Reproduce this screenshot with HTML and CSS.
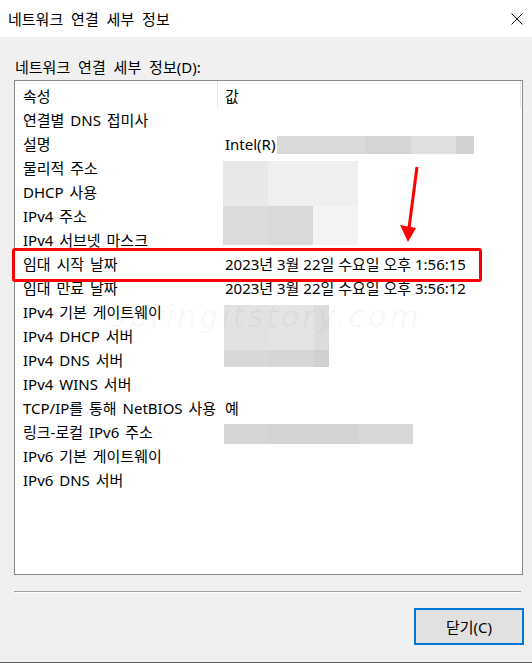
FILE: index.html
```html
<!DOCTYPE html>
<html lang="ko">
<head>
    <meta charset="UTF-8">
    <meta name="viewport" content="width=device-width, initial-scale=1.0">
    <title>네트워크 연결 세부 정보</title>
    <link rel="stylesheet" href="styles.css">
</head>
<body>
    <div class="window">
        <div class="titlebar">
            <span class="title">네트워크 연결 세부 정보</span>
            <svg class="close" width="12" height="12" viewBox="0 0 12 12">
                <path d="M0.5 0.5 L11.5 11.5 M11.5 0.5 L0.5 11.5" stroke="#111" stroke-width="1" fill="none"/>
            </svg>
        </div>

        <div class="content">
            <div class="label">네트워크 연결 세부 정보(D):</div>

            <div class="listbox">
                <div class="header">
                    <div class="hcell">속성</div>
                    <div class="hcell">값</div>
                    <div class="hcell end"></div>
                </div>

                <div class="row"><span>연결별 DNS 접미사</span><span></span></div>
                <div class="row"><span>설명</span><span>Intel(R)</span></div>
                <div class="row"><span>물리적 주소</span><span></span></div>
                <div class="row"><span>DHCP 사용</span><span></span></div>
                <div class="row"><span>IPv4 주소</span><span></span></div>
                <div class="row"><span>IPv4 서브넷 마스크</span><span></span></div>
                <div class="row"><span>임대 시작 날짜</span><span>2023년 3월 22일 수요일 오후 1:56:15</span></div>
                <div class="row"><span>임대 만료 날짜</span><span>2023년 3월 22일 수요일 오후 3:56:12</span></div>
                <div class="row"><span>IPv4 기본 게이트웨이</span><span></span></div>
                <div class="row"><span>IPv4 DHCP 서버</span><span></span></div>
                <div class="row"><span>IPv4 DNS 서버</span><span></span></div>
                <div class="row"><span>IPv4 WINS 서버</span><span></span></div>
                <div class="row"><span>TCP/IP를 통해 NetBIOS 사용</span><span>예</span></div>
                <div class="row"><span>링크-로컬 IPv6 주소</span><span></span></div>
                <div class="row"><span>IPv6 기본 게이트웨이</span><span></span></div>
                <div class="row"><span>IPv6 DNS 서버</span><span></span></div>

                <!-- pixelated redactions over the values -->
                <div class="blur blur-desc"></div>
                <div class="blur blur-mac"></div>
                <div class="blur blur-dns"></div>
                <div class="blur blur-ipv6"></div>

                <div class="watermark">springitstory.com</div>
            </div>

            <div class="separator"></div>

            <div class="actions">
                <button class="close-btn">닫기(C)</button>
            </div>
        </div>

        <!-- annotation -->
        <div class="highlight"></div>
        <svg class="arrow" width="30" height="80" viewBox="0 0 30 80">
            <path d="M19 1 L11 62" stroke="#ff0000" stroke-width="3" fill="none"/>
            <path d="M2 59 L10 76 L18 62 Z" fill="#ff0000"/>
        </svg>
    </div>
</body>
</html>
```

FILE: styles.css
```css
* {
    margin: 0;
    padding: 0;
    box-sizing: border-box;
}

body {
    font-family: "Noto Sans", "Noto Sans CJK KR", sans-serif;
    font-size: 15px;
    color: #000;
    background: #f0f0f0;
}

.window {
    position: relative;
    width: 532px;
    height: 663px;
    display: flex;
    flex-direction: column;
    border-bottom: 1px solid #5a5a5a;
}

/* Title bar */
.titlebar {
    height: 37px;
    background: #fff;
    display: flex;
    align-items: center;
    justify-content: space-between;
    padding: 0 9px 0 8px;
}

.title {
    line-height: 24px;
    word-spacing: 4px;
}

/* Body */
.content {
    flex: 1;
    background: #f0f0f0;
    padding: 18px 0 0 14px;
}

.label {
    line-height: 24px;
    height: 25px;
    padding-left: 1px;
    word-spacing: 4px;
}

.listbox {
    position: relative;
    width: 509px;
    height: 495px;
    background: #fff;
    border: 1px solid #828790;
    overflow: hidden;
}

.header {
    display: grid;
    grid-template-columns: 202px 303px 1fr;
    height: 27px;
}

.hcell {
    padding: 3px 0 0 8px;
    line-height: 24px;
}

.hcell + .hcell {
    border-left: 1px solid #e5e5e5;
    padding-left: 7px;
}

.hcell.end {
    padding: 0;
}

.row {
    display: grid;
    grid-template-columns: 202px 1fr;
    height: 24px;
    line-height: 24px;
    white-space: nowrap;
}

.row span {
    padding-left: 8px;
    overflow: hidden;
}

.row span:first-child {
    word-spacing: 2px;
}

/* Redaction blocks */
.blur {
    position: absolute;
}

.blur-desc {
    left: 262px;
    top: 55px;
    width: 197px;
    height: 18px;
    background: linear-gradient(to right, #dadada 0 88px, #d5d5d5 88px 134px, #e0e0e0 134px 179px, #d2d2d2 179px);
}

.blur-mac {
    left: 208px;
    top: 80px;
    width: 135px;
    height: 84px;
    background:
        linear-gradient(to right, #e8e8e8 0 45px, #efefef 45px) top / 100% 45px no-repeat,
        linear-gradient(to right, #dcdcdc 0 45px, #d9d9d9 45px 90px, #f4f4f4 90px) bottom / 100% 39px no-repeat;
}

.blur-dns {
    left: 209px;
    top: 224px;
    width: 105px;
    height: 62px;
    background:
        linear-gradient(to right, #e2e2e2 0 45px, #e4e4e4 45px 90px, #dcdcdc 90px) top / 100% 45px no-repeat,
        linear-gradient(to right, #d8d8d8 0 45px, #d6d6d6 45px 90px, #d0d0d0 90px) bottom / 100% 17px no-repeat;
}

.blur-ipv6 {
    left: 209px;
    top: 343px;
    width: 189px;
    height: 20px;
    background: linear-gradient(to right, #d6d6d6 0 45px, #d3d3d3 45px 90px, #d4d4d4 90px 135px, #d8d8d8 135px);
}

.watermark {
    position: absolute;
    left: 95px;
    top: 218px;
    font-family: "DejaVu Sans", sans-serif;
    font-style: italic;
    font-size: 30px;
    letter-spacing: 3px;
    color: rgba(0, 0, 0, 0.045);
}

/* Footer */
.separator {
    width: 507px;
    height: 2px;
    margin-top: 16px;
    border-top: 1px solid #a0a0a0;
    border-bottom: 1px solid #fff;
}

.actions {
    display: flex;
    justify-content: flex-end;
    padding: 15px 8px 0 0;
}

.close-btn {
    width: 110px;
    height: 37px;
    font-family: inherit;
    font-size: 15px;
    background: #e1e1e1;
    border: 2px solid #0078d7;
    color: #000;
}

/* Annotation */
.highlight {
    position: absolute;
    left: 12px;
    top: 248px;
    width: 470px;
    height: 34px;
    border: 3px solid #ff0000;
    border-radius: 3px;
}

.arrow {
    position: absolute;
    left: 398px;
    top: 166px;
}
```
